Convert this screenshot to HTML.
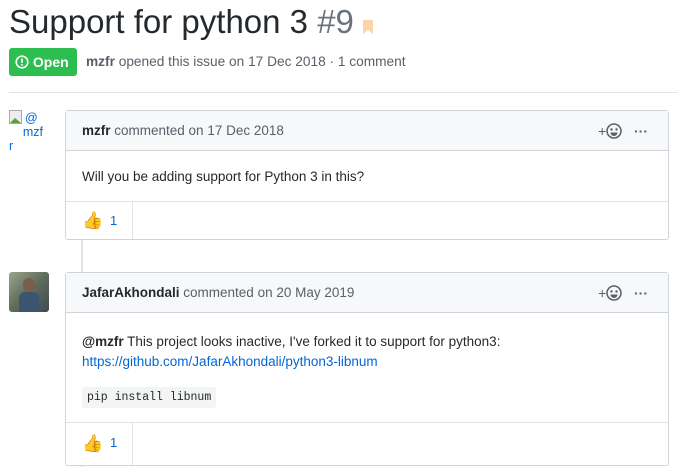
<!DOCTYPE html>
<html><head><style>
*{box-sizing:border-box}
body{margin:0;width:678px;height:467px;overflow:hidden;background:#fff;font-family:"Liberation Sans",Arial,sans-serif;color:#24292e;font-size:13.5px;position:relative}
.abs{position:absolute}
.title{left:9px;top:3px;font-size:33px;font-weight:400;white-space:nowrap;letter-spacing:0px}
.title span{color:#6a737d}
.badge{left:9px;top:48px;width:68px;height:28px;background:#2cbe4e;border-radius:3px;color:#fff;font-weight:bold;font-size:14px;line-height:28px;padding-left:6px}
.meta{left:86px;top:54px;color:#586069;font-size:13.7px}
.meta b{color:#586069}
.sep{left:9px;top:92px;width:669px;height:1px;background:#e1e4e8}
.box{border:1px solid #d1d5da;border-radius:3px;background:#fff}
.hdr{position:absolute;left:0;right:0;top:0;background:#f6f8fa;border-bottom:1px solid #d1d5da;color:#586069;padding-left:16px}
.hdr b{color:#24292e}
.react{position:absolute;left:0;right:0;bottom:0;border-top:1px solid #e1e4e8}
.react .div{position:absolute;left:66px;top:0;bottom:0;width:1px;background:#e1e4e8}
.react .n{position:absolute;left:44px;color:#0366d6;font-size:13px}
.tools{position:absolute;right:20px;top:0;color:#586069;font-size:14px}
.line{left:81px;width:2px;background:#e1e4e8}
a{color:#0366d6;text-decoration:none}
code{font-family:"Liberation Mono",monospace;font-size:11.5px;background:#f3f4f4;padding:4px 5px;border-radius:3px}
</style></head><body>
<div class="abs title">Support for python 3 <span>#9</span> <svg width="10" height="14" viewBox="0 0 10 14" style="vertical-align:-1px"><path d="M0 0h10v14L5 10 0 14z" fill="#ffd3a8"/></svg></div>
<div class="abs badge"><svg width="14" height="14" viewBox="0 0 14 14" style="vertical-align:-2px"><circle cx="7" cy="7" r="5.8" fill="none" stroke="#fff" stroke-width="1.6"/><rect x="6.2" y="3.5" width="1.6" height="4.5" fill="#fff"/><rect x="6.2" y="9" width="1.6" height="1.6" fill="#fff"/></svg> Open</div>
<div class="abs meta"><b>mzfr</b> opened this issue on 17 Dec 2018 · 1 comment</div>
<div class="abs sep"></div>

<div class="abs line" style="top:239px;height:34px"></div>
<div class="abs line" style="top:465px;height:2px"></div>

<div class="abs" style="left:9px;top:110px;width:42px;font-size:12.5px;line-height:14px;color:#0366d6"><svg width="16" height="14" viewBox="0 0 16 14" style="vertical-align:-2px"><rect x="0.5" y="0.5" width="12" height="13" fill="#eee" stroke="#aaa"/><path d="M1 13l5-5 6 5z" fill="#5a9e3a"/></svg>@<br>&nbsp;&nbsp;&nbsp;&nbsp;mzf<br>r</div>

<div class="abs box" style="left:65px;top:110px;width:604px;height:130px">
 <div class="hdr" style="height:40px;line-height:40px"><b>mzfr</b> commented on 17 Dec 2018<span class="tools">+<svg width="16" height="16" viewBox="0 0 16 16" style="vertical-align:-3px"><circle cx="8" cy="8" r="7" fill="none" stroke="#586069" stroke-width="1.5"/><circle cx="5.5" cy="6.5" r="1.2" fill="#586069"/><circle cx="10.5" cy="6.5" r="1.2" fill="#586069"/><path d="M4.5 9.5h7a3.5 3.5 0 0 1-7 0z" fill="#586069"/></svg> &nbsp;&nbsp;<b style="color:#586069">···</b></span></div>
 <div class="abs" style="left:16px;top:58px">Will you be adding support for Python 3 in this?</div>
 <div class="react" style="height:38px"><span class="abs" style="left:16px;top:9px;font-size:17px">👍</span><span class="n" style="top:11px">1</span><div class="div"></div></div>
</div>

<div class="abs" style="left:9px;top:272px;width:40px;height:40px;border-radius:3px;background:linear-gradient(135deg,#9aa58a,#5f6b5a 50%,#3d4a55)"><div class="abs" style="left:14px;top:6px;width:12px;height:14px;border-radius:6px;background:#7a5e4c"></div><div class="abs" style="left:10px;top:20px;width:20px;height:20px;border-radius:6px 6px 0 0;background:#3b5570"></div></div>

<div class="abs box" style="left:65px;top:272px;width:604px;height:194px">
 <div class="hdr" style="height:40px;line-height:40px"><b>JafarAkhondali</b> commented on 20 May 2019<span class="tools">+<svg width="16" height="16" viewBox="0 0 16 16" style="vertical-align:-3px"><circle cx="8" cy="8" r="7" fill="none" stroke="#586069" stroke-width="1.5"/><circle cx="5.5" cy="6.5" r="1.2" fill="#586069"/><circle cx="10.5" cy="6.5" r="1.2" fill="#586069"/><path d="M4.5 9.5h7a3.5 3.5 0 0 1-7 0z" fill="#586069"/></svg> &nbsp;&nbsp;<b style="color:#586069">···</b></span></div>
 <div class="abs" style="left:16px;top:59px;line-height:20px"><b>@mzfr</b> This project looks inactive, I've forked it to support for python3:<br><a>https://github.com/JafarAkhondali/python3-libnum</a></div>
 <div class="abs" style="left:16px;top:115px"><code>pip install libnum</code></div>
 <div class="react" style="height:43px"><span class="abs" style="left:16px;top:11px;font-size:17px">👍</span><span class="n" style="top:12px">1</span><div class="div"></div></div>
</div>
</body></html>
